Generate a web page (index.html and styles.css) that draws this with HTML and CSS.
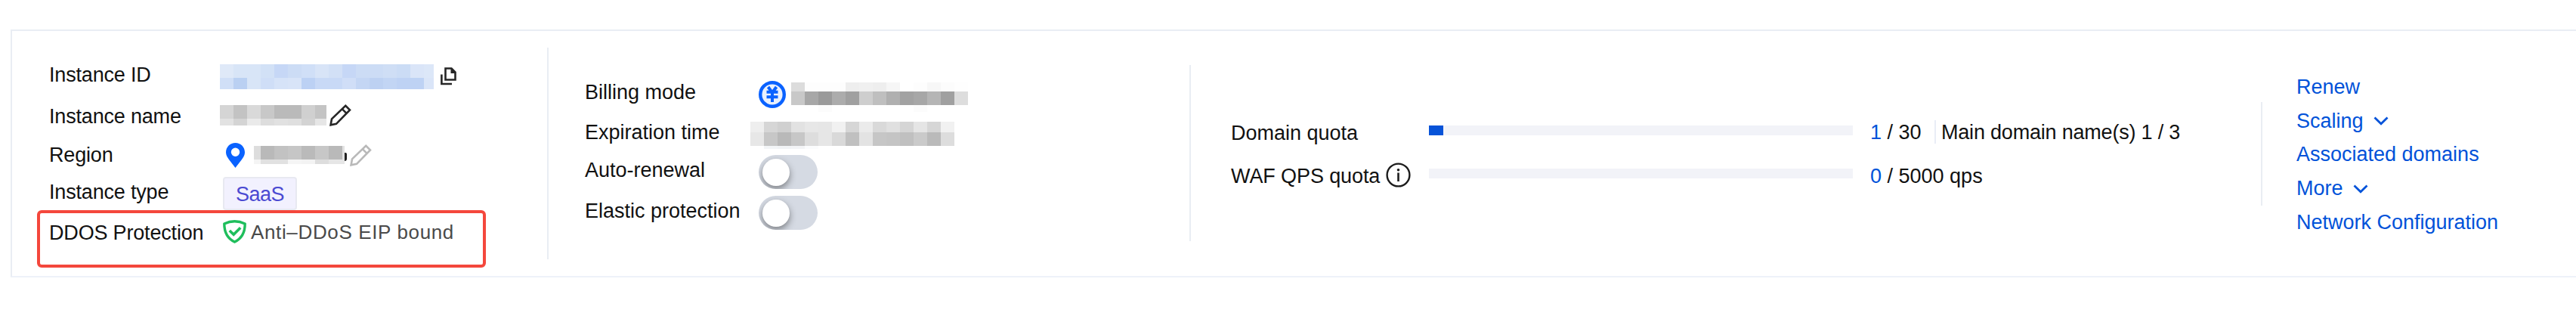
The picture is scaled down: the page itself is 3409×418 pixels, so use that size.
FILE: index.html
```html
<!DOCTYPE html>
<html lang="en">
<head>
<meta charset="utf-8">
<title>Instance overview</title>
<link rel="stylesheet" href="styles.css">
</head>
<body>
<main class="card">
  <section class="col basics">
    <div class="row id-row">
      <span class="label">Instance ID</span>
      <span class="mosaic id-mask" data-heights="18,15" data-widths="18*15,13" data-cells="dfe9f8 d8e5f7 d8e5f7 d2e1f6 c6d7f6 ccdcf5 d0dff7 d8e4f7 d2e0f6 c6d7f6 ccdcf5 ccdcf5 cfdef5 cbdcf5 dae5f8 dce7f8|d0dff7 bad0f2 d8e5f7 cfdef7 d6e3f8 d8e4f8 bcd1f4 c8d9f6 c8d9f6 d0def7 c4d6f4 bdd1f2 c2d5f4 bed2f4 bed2f4 dae5f8"></span>
      <svg class="copy" viewBox="0 0 21 24" width="21" height="24"><path d="M6.5 1.5h8l5 5v10h-13z" fill="none" stroke="#262626" stroke-width="2.6"/><path d="M13.5 1v7H20V6l-5-5z" fill="#262626"/><path d="M1.4 9.500V22H15" fill="none" stroke="#262626" stroke-width="2.6"/></svg>
    </div>
    <div class="row name-row">
      <span class="label">Instance name</span>
      <span class="mosaic name-mask" data-heights="18,9" data-widths="18*7,15" data-cells="d5d5d5 c3c3c3 d9d9d9 c8c8c8 bababa bababa d0d0d0 c4c4c4|e2e2e2 d4d4d4 eaeaea dddddd e1e1e1 dfdfdf d3d3d3 e6e6e6"></span>
      <svg class="pencil dark" viewBox="0 0 29 29" width="29" height="29"><path d="M1.600 27.300 3 19.400 21.300 1.800 27 7.500 9 25.800ZM16.800 6.200l5.700 5.700" /></svg>
    </div>
    <div class="row region-row">
      <span class="label">Region</span>
      <svg class="pin" viewBox="0 0 25 33" width="25" height="33"><path fill="#0a62ff" fill-rule="evenodd" d="M12.500 0C5.600 0 0 5.500 0 12.400 0 19 7 25 12.500 33 18 25 25 19 25 12.400 25 5.500 19.400 0 12.500 0ZM12.500 6.500a5.700 5.700 0 1 1 0 11.400 5.700 5.700 0 0 1 0-11.400Z"/></svg>
      <span class="mosaic region-mask" data-heights="18,6" data-widths="9,18*6,3" data-cells="dddddd b9b9b9 c2c2c2 c6c6c6 bababa c7c7c7 b9b9b9 e2e2e2|f4f4f4 e1e1e1 e1e1e1 f5f5f5 f3f3f3 dddddd e6e6e6 e6e6e6"></span>
      <span class="sliver"></span>
      <svg class="pencil muted" viewBox="0 0 29 29" width="29" height="29"><path d="M1.600 27.300 3 19.400 21.300 1.800 27 7.500 9 25.800ZM16.800 6.200l5.700 5.700" /></svg>
    </div>
    <div class="row type-row">
      <span class="label">Instance type</span>
      <span class="tag">SaaS</span>
    </div>
    <div class="row ddos-row">
      <span class="label">DDOS Protection</span>
      <svg class="shield" viewBox="0 0 31 31" width="31" height="31"><path d="M15.500 1.800C20.500 1.800 25 3 29.200 5 29.200 16 26 24 15.500 29 5 24 1.800 16 1.800 5 6 3 10.500 1.800 15.500 1.800Z" fill="none" stroke="#1fbe5c" stroke-width="3.400" stroke-linejoin="round"/><path d="m8.800 14 5.400 5.300 9-9" fill="none" stroke="#1fbe5c" stroke-width="3.600"/></svg>
      <span class="status">Anti–DDoS EIP bound</span>
    </div>
    <div class="highlight"></div>
  </section>
  <div class="divider first"></div>
  <section class="col billing">
    <div class="row bill-row">
      <span class="label">Billing mode</span>
      <svg class="yen" viewBox="0 0 36 36" width="36" height="36"><circle cx="18" cy="18" r="15.800" fill="#e9f0fd" stroke="#0a62ff" stroke-width="4.400"/><path d="m12.500 8 5.500 7.500L23.500 8M10.500 14.700h15M10.500 21.300h15M18 14v14" fill="none" stroke="#0a62ff" stroke-width="4"/></svg>
      <span class="mosaic bill-mask" data-heights="12,18,9" data-widths="18*13" data-cells="dcdcdc fdfdfd fdfdfd fdfdfd eeeeee f0f0f0 eeeeee f6f6f6 ffffff fdfdfd f7f7f7 fcfcfc fefefe|c8c8c8 a7a7a7 9a9a9a acacac a0a0a0 cecece bfbfbf b0b0b0 a2a2a2 a7a7a7 b5b5b5 a0a0a0 dddddd|ffffff ffffff fcfcfc ffffff ffffff ffffff ffffff ffffff ffffff fcfcfc ffffff ffffff ffffff"></span>
    </div>
    <div class="row exp-row">
      <span class="label short">Expiration time</span>
      <span class="mosaic exp-mask" data-heights="14,18,4" data-widths="18*15" data-cells="eeeeee d6d6d6 d0d0d0 e2e2e2 e7e7e7 e6e6e6 f1f1f1 d6d6d6 ebebeb d9d9d9 e0e0e0 d5d5d5 e5e5e5 d6d6d6 f1f1f1|e7e7e7 c7c7c7 b9b9b9 c7c7c7 dddddd e6e6e6 d9d9d9 c0c0c0 e3e3e3 c6c6c6 c4c4c4 c0c0c0 cacaca bababa dddddd|ffffff f3f5f7 f1f3f5 f3f4f6 fbfcfd ffffff ffffff ffffff ffffff ffffff ffffff ffffff ffffff ffffff ffffff"></span>
    </div>
    <div class="row renew-row">
      <span class="label">Auto-renewal</span>
      <span class="switch"><span class="knob"></span></span>
    </div>
    <div class="row elastic-row">
      <span class="label">Elastic protection</span>
      <span class="switch"><span class="knob"></span></span>
    </div>
  </section>
  <div class="divider second"></div>
  <section class="col quotas">
    <div class="row">
      <span class="label">Domain quota</span>
      <span class="bar"><span class="fill"></span></span>
      <span class="count"><b>1</b> / 30</span>
      <span class="mini-divider"></span>
      <span class="main-domains">Main domain name(s) 1 / 3</span>
    </div>
    <div class="row">
      <span class="label with-info"><span class="qps">WAF QPS quota</span><svg class="info" viewBox="0 0 33 33" width="33" height="33"><circle cx="16.500" cy="16.500" r="14.900" fill="none" stroke="#1c1c1c" stroke-width="2.400"/><path d="M16.500 13.500V25" stroke="#1c1c1c" stroke-width="2.600"/><circle cx="16.500" cy="9.800" r="1.800" fill="#1c1c1c"/></svg></span>
      <span class="bar"></span>
      <span class="count lower"><b>0</b> / 5000 qps</span>
    </div>
  </section>
  <div class="divider third"></div>
  <nav class="col actions">
    <a>Renew</a>
    <a>Scaling<svg class="chevron" viewBox="0 0 20 12" width="20" height="12"><path d="m1.500 1.500 8.500 8.200 8.500-8.200"/></svg></a>
    <a>Associated domains</a>
    <a>More<svg class="chevron" viewBox="0 0 20 12" width="20" height="12"><path d="m1.500 1.500 8.500 8.200 8.500-8.200"/></svg></a>
    <a>Network Configuration</a>
  </nav>
</main>
<script src="mosaic.js"></script>
</body>
</html>
```
FILE: styles.css
```css
* { box-sizing: border-box; }
body {
  margin: 0;
  height: 418px;
  overflow: hidden;
  background: #fff;
  color: #111;
  font: 27px/31px "Liberation Sans", Arial, sans-serif;
}
svg { display: block; flex: none; }
.card {
  display: flex;
  align-items: flex-start;
  width: 3395px;
  height: 328px;
  margin: 39px 0 0 14px;
  border: 2px solid #e9edf4;
  border-right: 0;
  border-bottom-color: #eef2f9;
  background: #fff;
}
.col { flex: none; white-space: nowrap; }
.row { display: flex; align-items: flex-start; }
.row > * { flex: none; }

/* Redacted values: rows of flat colour blocks */
.mosaic { display: block; }
.mosaic-line { display: flex; }

/* Instance basics */
.basics { position: relative; width: 708px; padding: 31px 0 0 49px; }
.basics .label { width: 226px; margin-top: 12px; letter-spacing: -0.18px; }
.id-row, .name-row { height: 54px; }
.region-row { height: 50px; }
.type-row { height: 47px; }
.ddos-row { height: 61px; }
.id-mask { margin-top: 13px; }
.copy { margin: 17px 0 0 9px; }
.name-mask { margin-top: 13px; }
.pencil { fill: none; stroke-width: 2.6; }
.dark { margin: 12px 0 0 4px; stroke: #262626; }
.muted { margin: 11px 0 0 4px; stroke: #b9b9b9; }
.basics .name-row .label { margin-top: 13px; }
.basics .region-row .label { margin-top: 10px; }
.basics .type-row .label { margin-top: 9px; }
.basics .ddos-row .label { margin-top: 16px; }
.pin { margin: 9px 0 0 8px; }
.region-mask { margin: 13px 0 0 12px; }
.sliver { width: 3px; height: 11px; margin-top: 22px; border-radius: 0 3px 5px 0; background: #222; }
.tag {
  width: 98px;
  height: 44px;
  margin: 4px 0 0 4px;
  border: 2px solid #e8e9f1;
  border-radius: 4px;
  background: #f2f1fe;
  color: #4b4ad2;
  line-height: 43px;
  text-align: center;
  letter-spacing: -0.5px;
}
.shield { margin: 14px 0 0 4px; }
.status { margin: 15px 0 0 6px; color: #4a4a4a; font-size: 26px; letter-spacing: 0.64px; }
.highlight {
  position: absolute;
  left: 33px;
  top: 237px;
  width: 594px;
  height: 76px;
  border: 4px solid #f4473c;
  border-radius: 6px;
}

/* Dividers */
.divider { flex: none; width: 2px; background: #e9edf3; }
.first { height: 280px; margin-top: 22px; }
.second { height: 233px; margin-top: 45px; }
.third { height: 137px; margin-top: 94px; }

/* Billing */
.billing { width: 848px; padding: 55px 0 0 48px; }
.billing .label { width: 230px; margin-top: 11px; }
.billing .short { width: 219px; margin-top: 12px; }
.bill-row, .exp-row { height: 52px; }
.renew-row { height: 50px; }
.billing .renew-row .label { margin-top: 10px; }
.billing .elastic-row .label { margin-top: 14px; }
.yen { margin-top: 11px; }
.bill-mask { margin: 13px 0 0 7px; }
.exp-mask { margin-top: 13px; }
.switch { width: 78px; height: 45px; margin-top: 5px; padding: 5px 0 0 5px; border-radius: 23px; background: #d5dae3; overflow: hidden; }
.elastic-row .switch { margin-top: 9px; }
.knob { display: block; width: 36px; height: 36px; border-radius: 50%; background: #fff; box-shadow: 0 4px 10px rgba(0, 0, 0, 0.42); }

/* Quotas */
.quotas { width: 1416px; padding: 106px 0 0 53px; }
.quotas .row { height: 57px; }
.quotas .label { width: 262px; margin-top: 14px; }
.quotas .with-info { display: flex; margin-top: 11px; }
.qps { width: 205px; margin-top: 3px; letter-spacing: -0.1px; }
.bar { width: 561px; height: 13px; margin-top: 19px; background: #f2f3f8; }
.fill { display: block; width: 19px; height: 13px; background: #0753d8; }
.count { width: 85px; margin: 13px 0 0 23px; }
.lower { width: auto; margin-top: 14px; }
.count b { color: #0052d9; font-weight: 400; }
.mini-divider { width: 2px; height: 31px; margin-top: 12px; background: #e9edf6; }
.main-domains { margin: 13px 0 0 7px; letter-spacing: -0.2px; }

/* Actions */
.actions { display: flex; flex-direction: column; padding: 52px 0 0 45px; color: #0052d9; }
.actions a { display: flex; align-items: center; height: 44.8px; }
.chevron { margin: 0 0 0 13px; fill: none; stroke: #0052d9; stroke-width: 2.8; }
```
FILE: mosaic.js
```js
// Builds each redaction block from its data attributes.
document.querySelectorAll(".mosaic").forEach(function (box) {
  var heights = box.dataset.heights.split(",");
  var widths = [];
  box.dataset.widths.split(",").forEach(function (part) {
    var pair = part.split("*");
    for (var i = 0; i < Number(pair[1] || 1); i++) widths.push(pair[0]);
  });
  box.dataset.cells.split("|").forEach(function (line, r) {
    var row = document.createElement("span");
    row.className = "mosaic-line";
    line.split(" ").forEach(function (color, c) {
      var cell = document.createElement("span");
      cell.style.width = widths[c] + "px";
      cell.style.height = heights[r] + "px";
      cell.style.background = "#" + color;
      row.appendChild(cell);
    });
    box.appendChild(row);
  });
});
```
